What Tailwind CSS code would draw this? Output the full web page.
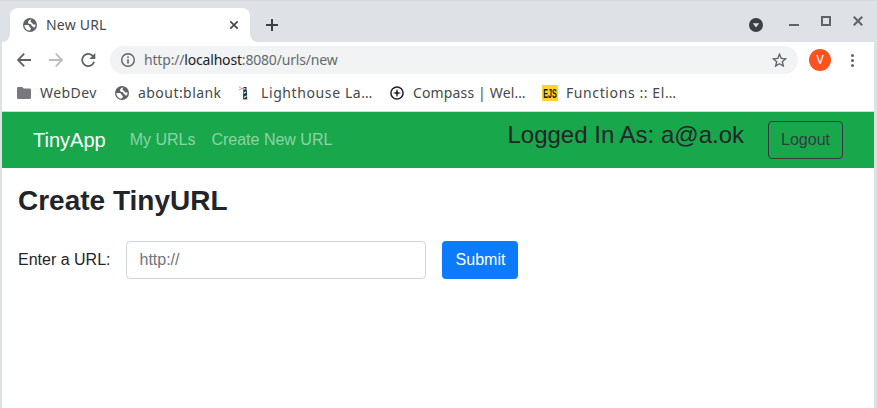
<!DOCTYPE html>
<html lang="en">
<head>
<meta charset="utf-8">
<title>New URL</title>
<script src="https://cdn.jsdelivr.net/npm/@tailwindcss/browser@4"></script>
</head>
<body class="w-[877px] h-[408px] overflow-hidden bg-[#dee1e6] font-['Liberation_Sans',Arial,sans-serif]">
<svg class="hidden">
  <symbol id="globe" viewBox="0 0 14 14">
    <circle cx="7" cy="7" r="7" fill="#5f6368"/>
    <path d="M8.6 1.6C7 1.5 5.2 2.6 5 4.3C4.9 5.6 6 6 7.2 6.1C8.2 6.2 8.3 7 8.6 7.8C9 8.6 10.3 8.3 10.6 9.5L11.6 9.6C12.4 8.6 12.7 7.5 12.5 6.3C11.6 6.7 10.2 6.7 9.6 5.7C9.2 5 8.9 4.5 8 4.3C7.2 4 7.5 2.6 8.6 1.6ZM1.4 7H4.7C6 7.1 6.4 8 6.5 9.1C6.8 9.7 7.9 9.6 7.9 10.6C7.9 11.5 7.3 11.8 6.8 12.6C3.7 12.5 1.4 10.2 1.4 7Z" fill="#fff"/>
  </symbol>
</svg>
<div class="flex flex-col h-[408px] pl-[2px] pr-[3px] font-['Noto_Sans',sans-serif] border-t border-[#d6dadf]">
  <!-- Tab strip -->
  <header class="flex h-[41px] shrink-0 pt-[7px]">
    <div class="w-2 h-full shrink-0 flex items-end"><svg class="w-2 h-2" viewBox="0 0 8 8"><path d="M8 0A8 8 0 0 1 0 8H8Z" fill="#fff"/></svg></div>
    <div class="flex items-center w-[240px] h-[34px] shrink-0 rounded-t-lg bg-white pl-[13px] pr-[11px]">
      <svg class="w-[14px] h-[14px] shrink-0"><use href="#globe"/></svg>
      <span class="ml-[9px] flex-1 text-[14px] leading-5 tracking-[0.2px] text-[#45494d] whitespace-nowrap">New URL</span>
      <svg class="w-[10px] h-[10px]" viewBox="0 0 10 10"><path d="M1.3 1.3L8.7 8.7M8.7 1.3L1.3 8.7" stroke="#45494d" stroke-width="1.7"/></svg>
    </div>
    <div class="w-2 h-full shrink-0 flex items-end"><svg class="w-2 h-2" viewBox="0 0 8 8"><path d="M0 0A8 8 0 0 0 8 8H0Z" fill="#fff"/></svg></div>
    <svg class="w-3 h-3 ml-2 mt-[11px]" viewBox="0 0 12 12"><path d="M6 0V12M0 6H12" stroke="#3c4043" stroke-width="2"/></svg>
    <div class="ml-auto flex items-start pr-[11px]">
      <svg class="w-[14px] h-[14px] mt-[10px]" viewBox="0 0 14 14"><circle cx="7" cy="7" r="7" fill="#3c4043"/><path d="M3.8 5.2H10.2L7 9.4Z" fill="#dee1e6"/></svg>
      <svg class="w-[10px] h-[2px] ml-[26px] mt-4" viewBox="0 0 10 2"><path d="M0 0H10V2H0Z" fill="#5f6368"/></svg>
      <svg class="w-[10px] h-[10px] ml-[22px] mt-2" viewBox="0 0 10 10"><path d="M1 1H9V9H1Z" fill="none" stroke="#5f6368" stroke-width="2"/></svg>
      <svg class="w-[10px] h-[10px] ml-[22px] mt-2" viewBox="0 0 10 10"><path d="M.8 .8L9.2 9.2M9.2 .8L.8 9.2" stroke="#5f6368" stroke-width="2"/></svg>
    </div>
  </header>
  <!-- Address bar -->
  <div class="flex items-center h-9 shrink-0 bg-white pl-[15px]">
    <svg class="w-[14px] h-[14px] shrink-0" viewBox="0 0 14 14"><path d="M14 7H1.3M7.2 .7L1 7L7.2 13.3" fill="none" stroke="#5f6368" stroke-width="1.8"/></svg>
    <svg class="w-[14px] h-[14px] shrink-0 ml-[18px]" viewBox="0 0 14 14"><path d="M0 7H12.7M6.8 .7L13 7L6.8 13.3" fill="none" stroke="#babcbe" stroke-width="1.8"/></svg>
    <svg class="w-[15px] h-[14px] shrink-0 ml-[18px]" viewBox="0 0 15 14"><path d="M12.3 3.5A6.1 6.1 0 1 0 13.1 8.8" fill="none" stroke="#5f6368" stroke-width="1.8"/><path d="M14.3 0V6H8.3Z" fill="#5f6368"/></svg>
    <div class="flex items-center w-[688px] h-7 shrink-0 ml-[14px] rounded-full bg-[#f1f3f4] pl-[11px] pr-[11px]">
      <svg class="w-[14px] h-[14px] shrink-0" viewBox="0 0 14 14"><circle cx="7" cy="7" r="6.3" fill="none" stroke="#5f6368" stroke-width="1.4"/><path d="M6.2 3.4H7.8V5H6.2ZM6.2 6.2H7.8V10.6H6.2Z" fill="#5f6368"/></svg>
      <span class="ml-[9px] flex-1 text-[14px] leading-5 tracking-[-0.18px] text-[#666a6e] whitespace-nowrap">http://<span class="text-[#202124]">localhost</span>:8080/urls/new</span>
      <svg class="w-[15px] h-[14px]" viewBox="0 0 24 23"><path d="M12 2L14.8 8.8L22.2 9.4L16.6 14.2L18.3 21.4L12 17.6L5.7 21.4L7.4 14.2L1.8 9.4L9.2 8.8Z" fill="none" stroke="#5f6368" stroke-width="2.2"/></svg>
    </div>
    <div class="flex items-center justify-center w-[22px] h-[22px] shrink-0 ml-[11px] rounded-full bg-[#fa5320] text-white text-[12px] leading-none">V</div>
    <svg class="w-[3px] h-[13px] ml-5" viewBox="0 0 3 13"><circle cx="1.5" cy="1.5" r="1.5" fill="#5f6368"/><circle cx="1.5" cy="6.5" r="1.5" fill="#5f6368"/><circle cx="1.5" cy="11.5" r="1.5" fill="#5f6368"/></svg>
  </div>
  <!-- Bookmarks -->
  <nav class="flex items-center h-[34px] shrink-0 bg-white border-b border-[#d5d7d9] pl-[15px] pb-[3px] text-[14px] leading-5 text-[#45494d] whitespace-nowrap">
    <svg class="w-[14px] h-3 shrink-0" viewBox="0 0 14 12"><path d="M1.3 0H5.3L6.8 1.6H12.7Q14 1.6 14 3V10.7Q14 12 12.7 12H1.3Q0 12 0 10.7V1.3Q0 0 1.3 0Z" fill="#76797d"/></svg>
    <span class="w-[84px] shrink-0 pl-[9px] tracking-[0.45px]">WebDev</span>
    <svg class="w-[14px] h-[14px] shrink-0"><use href="#globe"/></svg>
    <span class="w-[110px] shrink-0 pl-[9px] tracking-[0.45px]">about:blank</span>
    <svg class="w-[10px] h-[14px] shrink-0" viewBox="0 0 10 14"><path d="M0 1L3 2.5L0 4M2 2.5H4" fill="none" stroke="#f58f96"/><path d="M4.5 1H7.5V4H4.5ZM4.3 4H7.8L8.2 13H4Z" fill="#1d3446"/><path d="M5 2H6.5V3.5H5ZM4.6 6.5L7 5.3V6.8L4.6 8ZM4.8 10.8L7.6 9.2V10.7L4.8 12.2Z" fill="#c9e3e8"/><path d="M3.8 13.4H8.4" stroke="#f08990"/></svg>
    <span class="w-[141px] shrink-0 pl-3 tracking-[0.6px]">Lighthouse La…</span>
    <svg class="w-[14px] h-[14px] shrink-0" viewBox="0 0 14 14"><circle cx="7" cy="7" r="6.1" fill="none" stroke="#202124" stroke-width="1.5"/><path d="M7 3.6V10.4M3.6 7H10.4" stroke="#202124" stroke-width="1.2"/><path d="M7 5L9 7L7 9L5 7Z" fill="#202124"/></svg>
    <span class="w-[138px] shrink-0 pl-[9px] tracking-[0.15px]">Compass | Wel…</span>
    <svg class="w-4 h-4 shrink-0" viewBox="0 0 16 16"><path d="M0 0H16V16H0Z" fill="#fdd231"/><text transform="translate(1.3 12.8) scale(.53 1)" font-family="Liberation Sans" font-weight="700" font-size="13.5" fill="#161616">EJS</text></svg>
    <span class="pl-2 tracking-[0.6px]">Functions :: El…</span>
  </nav>
  <!-- Page -->
  <main class="flex-1 bg-white font-['Liberation_Sans',Arial,sans-serif] text-base text-[#212529]">
    <nav class="flex items-center h-14 bg-[#19a74c] pl-[31px] pr-[31px] whitespace-nowrap">
      <a class="text-[20px] leading-[30px] text-white">TinyApp</a>
      <a class="ml-6 text-white/50">My URLs</a>
      <a class="ml-4 text-white/50">Create New URL</a>
      <span class="ml-auto mb-3 text-[24px] leading-[29px]">Logged In As: a@a.ok</span>
      <button class="ml-6 h-[38px] w-[75px] rounded border border-[#343a40] text-[#343a40]">Logout</button>
    </nav>
    <h1 class="pl-4 pt-4 text-[28px] leading-[34px] font-bold">Create TinyURL</h1>
    <form class="flex items-center pl-4 mt-[23px]">
      <label>Enter a URL:</label>
      <input type="text" placeholder="http://" class="ml-4 w-[300px] h-[38px] rounded border border-[#ced4da] px-3 placeholder:text-[#6c757d]">
      <button type="button" class="ml-4 w-[76px] h-[38px] rounded bg-[#0d7bff] text-white">Submit</button>
    </form>
  </main>
</div>
</body>
</html>
